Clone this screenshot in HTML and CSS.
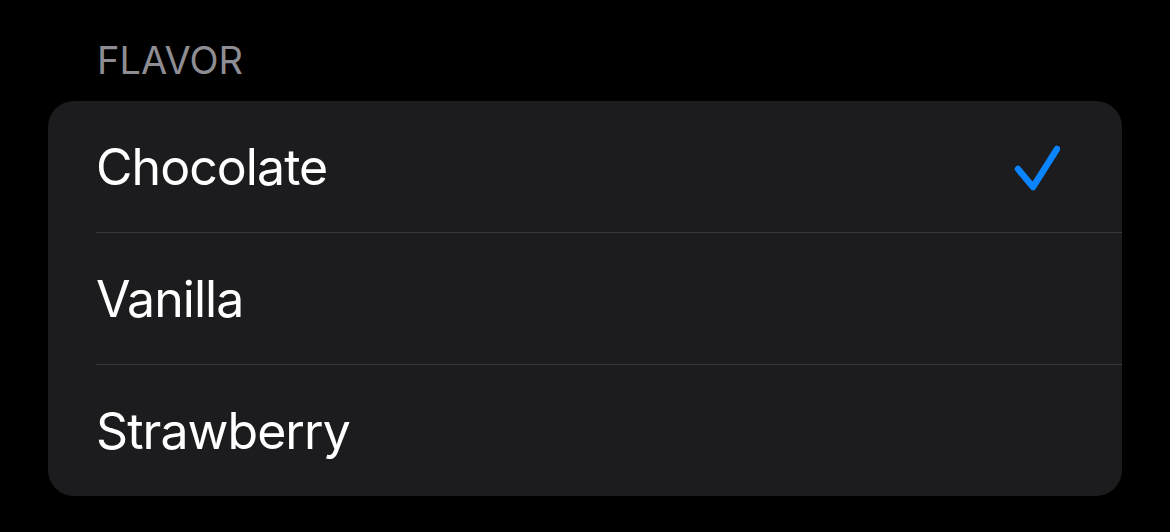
FILE: index.html
```html
<!DOCTYPE html>
<html>
<head>
<meta charset="utf-8">
<link rel="stylesheet" href="styles.css">
</head>
<body>
<div class="section">
  <div class="header">FLAVOR</div>
  <div class="card">
    <div class="row first">
      <span class="label">Chocolate</span>
      <svg class="check" width="48" height="48" viewBox="0 0 48 48"><path d="M6 26 L21 44 L45 6" fill="none" stroke="#0a84ff" stroke-width="6.5" stroke-linecap="round" stroke-linejoin="round"/></svg>
    </div>
    <div class="row"><span class="label">Vanilla</span></div>
    <div class="row"><span class="label">Strawberry</span></div>
  </div>
</div>
</body>
</html>
```
FILE: styles.css
```css
html, body { margin: 0; padding: 0; background: #000; }
body { width: 1170px; height: 532px; overflow: hidden; font-family: Inter, "Noto Sans", sans-serif; }
.section { padding: 36px 48px 0 48px; }
.header { color: #8d8d93; font-size: 38px; line-height: 48px; padding-left: 49px; margin-bottom: 17px; }
.card { background: #1c1c1e; border-radius: 26px; overflow: hidden; width: 1074px; }
.row { height: 132px; margin-left: 48px; padding-right: 62px; display: flex; align-items: center; justify-content: space-between; box-sizing: border-box; }
.row.first { height: 131px; }
.row + .row { border-top: 1px solid #38383a; }
.label { color: #fff; font-size: 50px; letter-spacing: -0.95px; }
.check { margin-top: 0; }
```
